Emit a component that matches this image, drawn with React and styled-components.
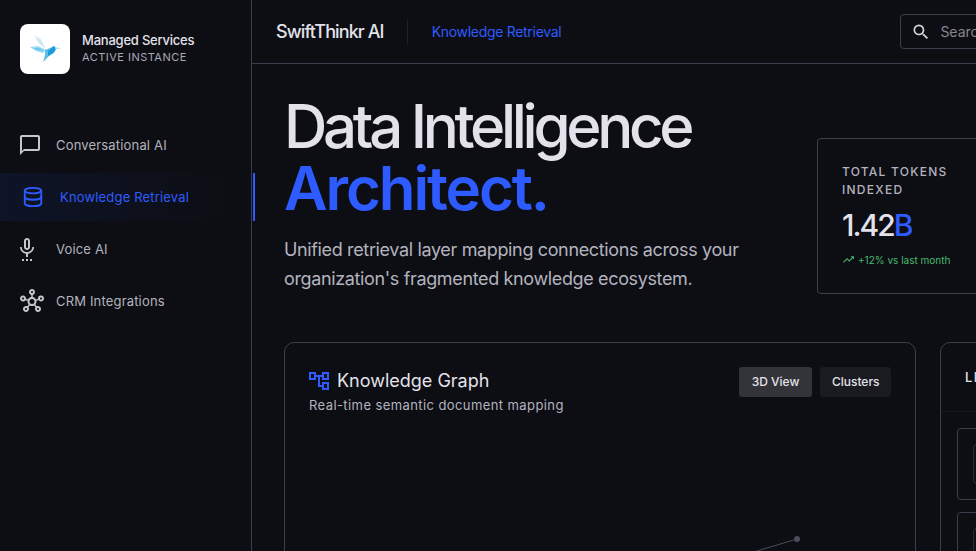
import styled, { createGlobalStyle } from "styled-components";
import {
  MdOutlineChatBubbleOutline,
  MdOutlineSettingsVoice,
  MdOutlineHub,
  MdOutlineAccountTree,
  MdOutlineSearch,
  MdTrendingUp,
} from "react-icons/md";
import { Database } from "lucide-react";

const blue = "#2e5bff";
const line = "#3c3e4e";

const Global = createGlobalStyle`
  html, body { margin: 0; height: 100%; background: #0d0e13; overflow: hidden; }
  * { box-sizing: border-box; }
  body { font-family: Inter, "Liberation Sans", sans-serif; }
`;

const Shell = styled.div`
  display: flex;
  width: 976px;
  height: 551px;
  overflow: hidden;
  color: #e3e2ea;
`;

const Sidebar = styled.aside`
  position: relative;
  flex: 0 0 252px;
  border-right: 1px solid ${line};
`;

const Brand = styled.div`
  display: flex;
  align-items: flex-start;
  gap: 12px;
  padding: 24px 20px 0;
  height: 121px;
`;

const LogoBox = styled.div`
  width: 50px;
  height: 50px;
  border-radius: 8px;
  background: #fff;
  display: flex;
  align-items: center;
  justify-content: center;
`;

const BrandText = styled.div`
  padding-top: 8px;
`;

const BrandName = styled.div`
  font-size: 13px;
  font-weight: 500;
  line-height: 16px;
  letter-spacing: -0.22px;
`;

const BrandSub = styled.div`
  margin-top: 1px;
  font-size: 11px;
  line-height: 16px;
  letter-spacing: 0.48px;
  color: #a9a9b6;
`;

const Nav = styled.nav`
  display: flex;
  flex-direction: column;
  gap: 4px;
`;

const NavItem = styled.div`
  position: relative;
  height: 48px;
  display: flex;
  align-items: center;
  padding-left: ${(p) => (p.$active ? "24px" : "20px")};
  font-size: 13px;
  letter-spacing: 0.17px;
  color: ${(p) => (p.$active ? blue : "#b3b3bf")};
  background: ${(p) =>
    p.$active ? "linear-gradient(90deg, #0e1428 0%, #0d0e13 95%)" : "none"};
`;

const NavIcon = styled.span`
  flex: 0 0 ${(p) => p.$width};
  display: flex;
  margin-left: ${(p) => p.$shift};
  color: ${(p) => (p.$active ? blue : "#c6c6d0")};
`;

const ActiveBar = styled.span`
  position: absolute;
  top: 0;
  bottom: 0;
  right: -4px;
  width: 2px;
  background: ${blue};
`;

const Main = styled.main`
  flex: 0 0 1035px;
`;

const Topbar = styled.header`
  height: 64px;
  border-bottom: 1px solid ${line};
  display: flex;
  align-items: center;
  padding-left: 24px;
`;

const Product = styled.div`
  font-size: 18px;
  font-weight: 500;
  letter-spacing: -0.9px;
  padding-right: 23px;
  height: 26px;
  line-height: 26px;
  border-right: 1px solid #1f2029;
`;

const Crumb = styled.div`
  margin-left: 24px;
  font-size: 14px;
  font-weight: 400;
  letter-spacing: -0.3px;
  color: ${blue};
`;

const Search = styled.div`
  margin-left: 339px;
  width: 300px;
  height: 35px;
  border: 1px solid ${line};
  border-radius: 4px;
  display: flex;
  align-items: center;
  gap: 9px;
  padding-left: 10px;
  font-size: 14px;
  color: #85858f;
`;

const Content = styled.div`
  padding: 32px 32px 0;
`;

const Hero = styled.section`
  display: flex;
  align-items: flex-end;
  margin-bottom: 48px;
`;

const HeroText = styled.div`
  flex: 0 0 533px;
`;

const Title = styled.h1`
  margin: -1px 0 16px;
  font-size: 60px;
  line-height: 62px;
  font-weight: 500;
  color: #e3e2ea;
`;

const TitleLine = styled.span`
  display: block;
  font-weight: ${(p) => p.$weight};
  letter-spacing: ${(p) => p.$tracking};
  color: ${(p) => p.$color};
`;

const Lead = styled.p`
  margin: 0 0 1px;
  font-size: 18px;
  line-height: 29px;
  width: 480px;
  letter-spacing: -0.36px;
  color: #b3b3bf;
`;

const StatCard = styled.div`
  width: 300px;
  height: 156px;
  border: 1px solid ${line};
  border-radius: 4px;
  padding: 24px;
`;

const StatLabel = styled.div`
  font-size: 12px;
  line-height: 18px;
  font-weight: 500;
  letter-spacing: 1.25px;
  color: #b3b3bf;
  text-transform: uppercase;
  width: 130px;
`;

const StatValue = styled.div`
  margin-top: 7px;
  font-size: 30px;
  line-height: 38px;
  font-weight: 500;
  letter-spacing: -2px;
`;

const StatUnit = styled.span`
  color: ${blue};
`;

const Trend = styled.div`
  margin-top: 9px;
  display: flex;
  align-items: center;
  gap: 3px;
  font-size: 10px;
  color: #47b96b;
`;

const Panels = styled.section`
  display: flex;
  gap: 24px;
`;

const Panel = styled.article`
  position: relative;
  flex: ${(p) => p.$flex};
  height: 400px;
  border: 1px solid ${line};
  border-radius: 10px;
`;

const GraphHead = styled.div`
  display: flex;
  justify-content: space-between;
  padding: 24px 24px 0;
`;

const GraphTitle = styled.h2`
  margin: 0 0 0 -2px;
  display: flex;
  align-items: center;
  gap: 6px;
  font-size: 18px;
  line-height: 28px;
  font-weight: 400;
  color: #e3e2ea;
  svg { color: ${blue}; }
`;

const GraphSub = styled.p`
  margin: 0;
  font-size: 13px;
  line-height: 20px;
  letter-spacing: 0.41px;
  color: #b3b3bf;
`;

const Tabs = styled.div`
  display: flex;
  gap: 8px;
`;

const Tab = styled.button`
  height: 30px;
  padding: 0 ${(p) => (p.$active ? "13px" : "11.5px")} 2px;
  border: 0;
  border-radius: 3px;
  font: 500 12px Inter, sans-serif;
  color: #e3e2ea;
  background: ${(p) => (p.$active ? "#33343a" : "#1a1b21")};
`;

const GraphLines = styled.svg`
  position: absolute;
  left: 440px;
  top: 180px;
`;

const ListHead = styled.div`
  height: 69px;
  padding: 26px 24px 0;
  font-size: 13px;
  font-weight: 500;
  letter-spacing: 1.3px;
  white-space: nowrap;
  border-bottom: 1px solid #17181f;
`;

const List = styled.div`
  padding: 16px;
  display: flex;
  flex-direction: column;
  gap: 12px;
`;

const ListRow = styled.div`
  height: 72px;
  border: 1px solid ${line};
  border-radius: 4px;
  padding: 15px;
`;

const RowIcon = styled.div`
  width: 40px;
  height: 40px;
  border: 1px solid #2a2b36;
  border-radius: 4px;
`;

const Bird = () => (
  <svg width="31" height="30" viewBox="0 0 31 30">
    <path d="M4 1 L11 5 L16 15 L9 10 Z" fill="#dcedf6" />
    <path d="M6 3 L11 7 L14 13 L9 8 Z" fill="#c6e4f2" />
    <path d="M0 13 L8 12 L16 16 L13 19 L6 17 Z" fill="#9ad9f3" />
    <path d="M3 14 L9 14 L14 17 L7 16 Z" fill="#6cc5ec" />
    <path d="M15 16 L20 14 L24 12 L26 15 L24 19 L19 22 L13 28 L15 21 Z" fill="#5cbde8" />
    <path d="M18 17 L24 12 L26 15 L23 19 L18 22 Z" fill="#1d9bd8" />
    <path d="M25 13 L31 14.5 L25 15 Z" fill="#a5d9ef" />
  </svg>
);

export default function App() {
  return (
    <Shell>
      <Global />
      <Sidebar>
        <Brand>
          <LogoBox>
            <Bird />
          </LogoBox>
          <BrandText>
            <BrandName>Managed Services</BrandName>
            <BrandSub>ACTIVE INSTANCE</BrandSub>
          </BrandText>
        </Brand>
        <Nav>
          <NavItem>
            <NavIcon $width="38px" $shift="-2px">
              <MdOutlineChatBubbleOutline size={24} />
            </NavIcon>
            Conversational AI
          </NavItem>
          <NavItem $active>
            <NavIcon $width="38px" $shift="-2px" $active>
              <Database size={22} strokeWidth={2} />
            </NavIcon>
            Knowledge Retrieval
            <ActiveBar />
          </NavItem>
          <NavItem>
            <NavIcon $width="41px" $shift="-5px">
              <MdOutlineSettingsVoice size={24} />
            </NavIcon>
            Voice AI
          </NavItem>
          <NavItem>
            <NavIcon $width="36px" $shift="0">
              <MdOutlineHub size={24} />
            </NavIcon>
            CRM Integrations
          </NavItem>
        </Nav>
      </Sidebar>
      <Main>
        <Topbar>
          <Product>SwiftThinkr AI</Product>
          <Crumb>Knowledge Retrieval</Crumb>
          <Search>
            <MdOutlineSearch size={20} color="#d4d4dc" />
            Search
          </Search>
        </Topbar>
        <Content>
          <Hero>
            <HeroText>
              <Title>
                <TitleLine $weight="500" $tracking="-4.3px">Data Intelligence</TitleLine>
                <TitleLine $weight="600" $tracking="-2.1px" $color={blue}>Architect.</TitleLine>
              </Title>
              <Lead>
                Unified retrieval layer mapping connections across your organization's fragmented knowledge ecosystem.
              </Lead>
            </HeroText>
            <StatCard>
              <StatLabel>Total Tokens Indexed</StatLabel>
              <StatValue>
                1.42<StatUnit>B</StatUnit>
              </StatValue>
              <Trend>
                <MdTrendingUp size={13} />
                +12% vs last month
              </Trend>
            </StatCard>
          </Hero>
          <Panels>
            <Panel $flex="0 0 632px">
              <GraphHead>
                <div>
                  <GraphTitle>
                    <MdOutlineAccountTree size={24} />
                    Knowledge Graph
                  </GraphTitle>
                  <GraphSub>Real-time semantic document mapping</GraphSub>
                </div>
                <Tabs>
                  <Tab $active>3D View</Tab>
                  <Tab>Clusters</Tab>
                </Tabs>
              </GraphHead>
              <GraphLines width="100" height="40" viewBox="0 0 100 40">
                <line x1="0" y1="37.6" x2="72" y2="16" stroke="#4a4c5c" strokeWidth="1" />
                <circle cx="72" cy="16" r="3" fill="#4a4c5c" />
              </GraphLines>
            </Panel>
            <Panel $flex="1">
              <ListHead>LIVE SOURCES</ListHead>
              <List>
                <ListRow>
                  <RowIcon />
                </ListRow>
                <ListRow>
                  <RowIcon />
                </ListRow>
              </List>
            </Panel>
          </Panels>
        </Content>
      </Main>
    </Shell>
  );
}
